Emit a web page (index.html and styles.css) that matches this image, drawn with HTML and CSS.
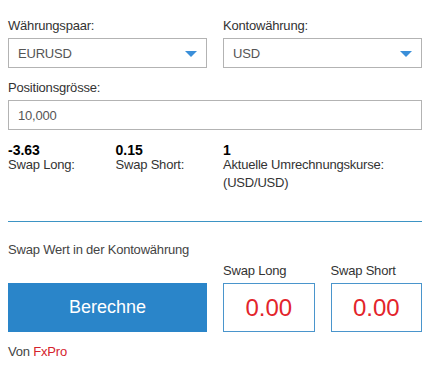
FILE: index.html
```html
<!DOCTYPE html>
<html>
<head>
    <title>Swap Rechner</title>
    <link rel="stylesheet" href="styles.css">
</head>
<body>
    <div class="calc">
        <div class="row">
            <div class="field">
                <label>Währungspaar:</label>
                <div class="select">
                    <span>EURUSD</span>
                    <svg width="12" height="6" viewBox="0 0 12 6"><path d="M0 0H12L6 6Z" fill="#3a8fd9"/></svg>
                </div>
            </div>
            <div class="field">
                <label>Kontowährung:</label>
                <div class="select">
                    <span>USD</span>
                    <svg width="12" height="6" viewBox="0 0 12 6"><path d="M0 0H12L6 6Z" fill="#3a8fd9"/></svg>
                </div>
            </div>
        </div>
        <div class="field size">
            <label>Positionsgrösse:</label>
            <div class="input">10,000</div>
        </div>
        <div class="row info">
            <div class="half">
                <div class="stat">
                    <div class="val">-3.63</div>
                    <div class="lbl">Swap Long:</div>
                </div>
                <div class="stat">
                    <div class="val">0.15</div>
                    <div class="lbl">Swap Short:</div>
                </div>
            </div>
            <div class="stat">
                <div class="val">1</div>
                <div class="lbl">Aktuelle Umrechnungskurse:</div>
                <div class="lbl pair">(USD/USD)</div>
            </div>
        </div>
        <div class="sep"></div>
        <div class="caption">Swap Wert in der Kontowährung</div>
        <div class="row result">
            <button class="btn">Berechne</button>
            <div class="half">
                <div class="out">
                    <label>Swap Long</label>
                    <div class="box">0.00</div>
                </div>
                <div class="out">
                    <label>Swap Short</label>
                    <div class="box">0.00</div>
                </div>
            </div>
        </div>
        <div class="credit">Von <a href="#">FxPro</a></div>
    </div>
</body>
</html>
```

FILE: styles.css
```css
body {
    font-family: "Liberation Sans", Arial, sans-serif;
    font-size: 13px;
    letter-spacing: -0.2px;
    color: #333;
    background-color: #fff;
    margin: 0;
    padding: 0;
}
.calc {
    width: 414px;
    padding: 18px 0 0 8px;
}
.row {
    display: grid;
    grid-template-columns: 1fr 1fr;
    gap: 16px;
}
.half {
    display: grid;
    grid-template-columns: 1fr 1fr;
    gap: 16px;
}
.field label,
.out label {
    display: block;
    line-height: 15px;
    margin-bottom: 5px;
}
.select,
.input {
    box-sizing: border-box;
    height: 30px;
    border: 1px solid #b3b3b3;
    padding: 0 9px;
    color: #555;
    display: flex;
    align-items: center;
}
.select {
    justify-content: space-between;
}
.select svg {
    margin-top: 1px;
}
.size {
    margin-top: 12px;
}
.info {
    margin-top: 13px;
}
.val {
    font-size: 14px;
    font-weight: bold;
    color: #000;
    line-height: 14px;
    letter-spacing: 0;
}
.lbl {
    line-height: 14px;
    margin-top: 1px;
}
.pair {
    margin-top: 4px;
}
.sep {
    height: 1px;
    background-color: #3d94c4;
    margin-top: 31px;
}
.caption {
    margin-top: 20px;
    line-height: 15px;
    color: #444;
}
.result {
    margin-top: 6px;
    align-items: end;
}
.btn {
    height: 49px;
    border: 0;
    background-color: #2a85c9;
    color: #fff;
    font-family: inherit;
    font-size: 18px;
    letter-spacing: 0;
    padding: 0;
}
.box {
    box-sizing: border-box;
    height: 49px;
    border: 1px solid #4a95cc;
    color: #e3242b;
    font-size: 24px;
    letter-spacing: 0;
    display: flex;
    align-items: center;
    justify-content: center;
}
.credit {
    margin-top: 12px;
    line-height: 15px;
    color: #444;
}
.credit a {
    color: #d5232d;
    text-decoration: none;
}
```
